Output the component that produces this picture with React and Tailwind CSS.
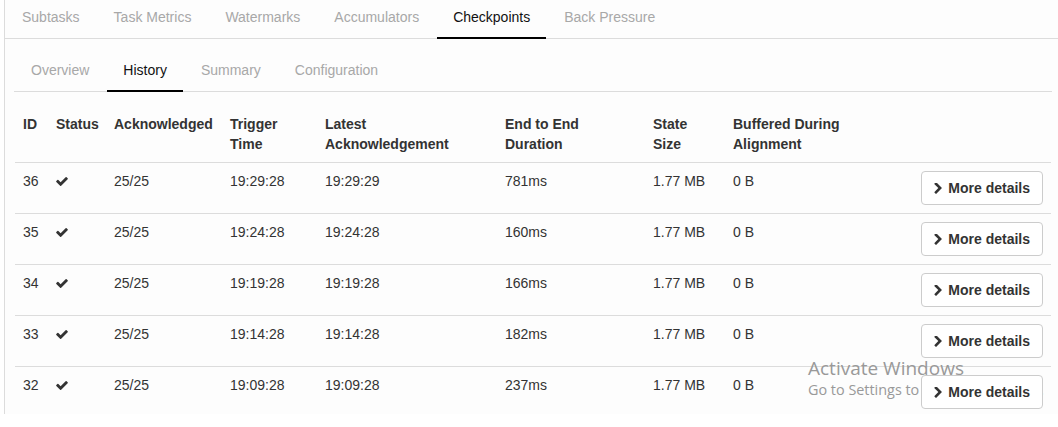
import React from 'react';

const topTabs = ['Subtasks', 'Task Metrics', 'Watermarks', 'Accumulators', 'Checkpoints', 'Back Pressure'];
const subTabs = ['Overview', 'History', 'Summary', 'Configuration'];

const rows = [
  { id: 36, ack: '25/25', trigger: '19:29:28', latest: '19:29:29', e2e: '781ms', size: '1.77 MB', buffered: '0 B' },
  { id: 35, ack: '25/25', trigger: '19:24:28', latest: '19:24:28', e2e: '160ms', size: '1.77 MB', buffered: '0 B' },
  { id: 34, ack: '25/25', trigger: '19:19:28', latest: '19:19:28', e2e: '166ms', size: '1.77 MB', buffered: '0 B' },
  { id: 33, ack: '25/25', trigger: '19:14:28', latest: '19:14:28', e2e: '182ms', size: '1.77 MB', buffered: '0 B' },
  { id: 32, ack: '25/25', trigger: '19:09:28', latest: '19:09:28', e2e: '237ms', size: '1.77 MB', buffered: '0 B' },
];

function Check() {
  return (
    <svg viewBox="121 334 1550 1188" width="12" height="9" className="mt-[6px]">
      <path fill="#333" d="M1671 566q0 40-28 68l-724 724-136 136q-28 28-68 28t-68-28l-136-136-362-362q-28-28-28-68t28-68l136-136q28-28 68-28t68 28l294 295 656-657q28-28 68-28t68 28l136 136q28 28 28 68z" />
    </svg>
  );
}

function Chevron() {
  return (
    <svg viewBox="300 140 1100 1510" width="8" height="11">
      <path fill="#333" d="M1363 877l-742 742q-19 19-45 19t-45-19l-166-166q-19-19-19-45t19-45l531-531-531-531q-19-19-19-45t19-45l166-166q19-19 45-19t45 19l742 742q19 19 19 45t-19 45z" />
    </svg>
  );
}

function Tabs({ items, active }) {
  return (
    <div className="flex gap-[2px] pl-px">
      {items.map(t => (
        <div
          key={t}
          className={`h-[39px] -mb-px px-4 pt-[7px] leading-5 text-sm whitespace-nowrap border-b-2 ${t === active ? 'border-black text-[#111]' : 'border-transparent text-[#a8a8a8]'}`}
        >
          {t}
        </div>
      ))}
    </div>
  );
}

export default function App() {
  return (
    <div className="bg-white h-[427px]" style={{ fontFamily: '"Liberation Sans", Arial, sans-serif' }}>
      <div className="relative ml-[4px] h-[414px] overflow-hidden border-l border-[#dcdcdc] bg-[#fdfdfd]">
        <div className="border-b border-[#dcdcdc]">
          <Tabs items={topTabs} active="Checkpoints" />
        </div>

        <div className="ml-[9px] mr-[6px] pt-[14px]">
          <div className="border-b border-[#dcdcdc]">
            <Tabs items={subTabs} active="History" />
          </div>

          <table className="ml-px mt-[14px] w-[1036px] table-fixed border-collapse text-sm leading-5 text-[#333]">
            <colgroup>
              <col className="w-[33px]" />
              <col className="w-[58px]" />
              <col className="w-[116px]" />
              <col className="w-[95px]" />
              <col className="w-[180px]" />
              <col className="w-[148px]" />
              <col className="w-[80px]" />
              <col className="w-[189px]" />
              <col className="w-[137px]" />
            </colgroup>
            <thead>
              <tr className="border-b border-[#dcdcdc] text-left align-top">
                <th className="p-2 font-bold">ID</th>
                <th className="p-2 font-bold">Status</th>
                <th className="p-2 font-bold">Acknowledged</th>
                <th className="p-2 font-bold">Trigger Time</th>
                <th className="p-2 font-bold">Latest Acknowledgement</th>
                <th className="p-2 font-bold">End to End Duration</th>
                <th className="p-2 font-bold">State Size</th>
                <th className="p-2 pr-[70px] font-bold">Buffered During Alignment</th>
                <th className="p-2"></th>
              </tr>
            </thead>
            <tbody>
              {rows.map(r => (
                <tr key={r.id} className="border-b border-[#dcdcdc] align-top">
                  <td className="p-2">{r.id}</td>
                  <td className="p-2"><Check /></td>
                  <td className="p-2">{r.ack}</td>
                  <td className="p-2">{r.trigger}</td>
                  <td className="p-2">{r.latest}</td>
                  <td className="p-2">{r.e2e}</td>
                  <td className="p-2">{r.size}</td>
                  <td className="p-2">{r.buffered}</td>
                  <td className="p-2">
                    <div className="flex justify-end">
                      <button className="relative z-10 flex h-[34px] items-center gap-[6px] whitespace-nowrap rounded border border-[#ccc] bg-white px-3 font-bold text-[#333]">
                        <Chevron />
                        More details
                      </button>
                    </div>
                  </td>
                </tr>
              ))}
            </tbody>
          </table>
        </div>

        <div className="absolute left-[803px] top-[356px] text-[#999]" style={{ fontFamily: '"Open Sans", "Noto Sans", sans-serif' }}>
          <div className="text-[19px] leading-6">Activate Windows</div>
          <div className="text-[14.4px] leading-5">Go to Settings to activate Windows.</div>
        </div>
      </div>
    </div>
  );
}
